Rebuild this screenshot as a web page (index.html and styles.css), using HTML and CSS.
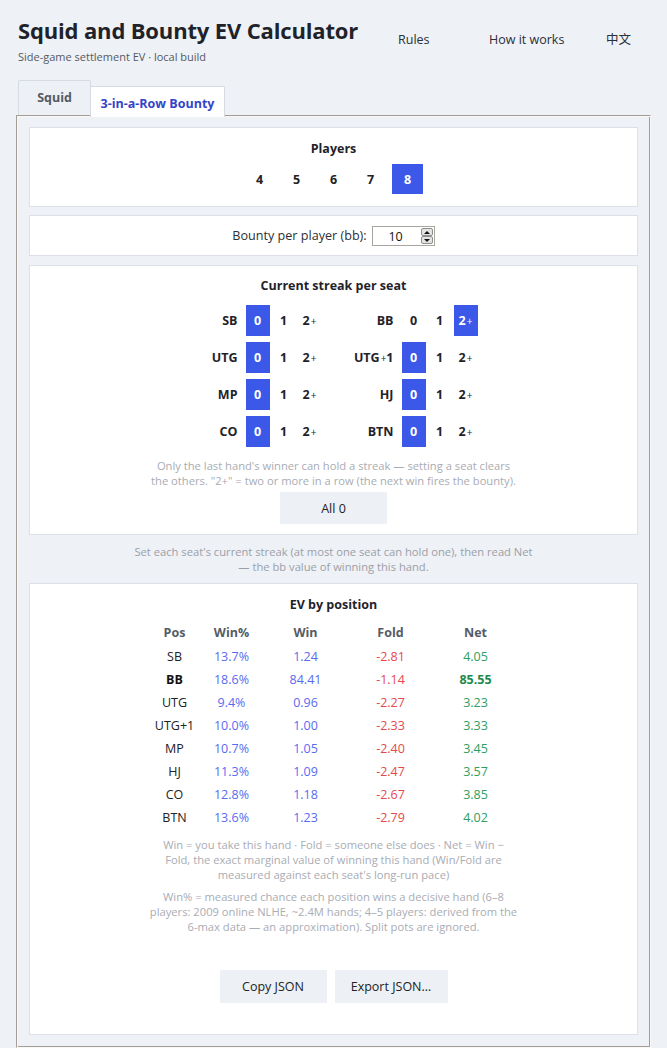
FILE: index.html
```html
<!DOCTYPE html>
<html lang="en">
<head>
<meta charset="utf-8">
<title>Squid and Bounty EV Calculator</title>
<link rel="stylesheet" href="styles.css">
</head>
<body>
<header class="top">
  <div class="brand">
    <h1 class="title">Squid and Bounty EV Calculator</h1>
    <div class="sub">Side-game settlement EV · local build</div>
  </div>
  <nav class="nav">
    <a class="nav-item nav-rules" href="#">Rules</a>
    <a class="nav-item nav-how" href="#">How it works</a>
    <a class="nav-item nav-lang" href="#">中文</a>
  </nav>
</header>

<div class="tabs">
  <button class="tab">Squid</button>
  <button class="tab tab-active">3-in-a-Row Bounty</button>
</div>

<div class="panel">
  <section class="card card-players">
    <div class="card-title">Players</div>
    <div class="pbtns">
      <button class="pbtn">4</button>
      <button class="pbtn">5</button>
      <button class="pbtn">6</button>
      <button class="pbtn">7</button>
      <button class="pbtn sel">8</button>
    </div>
  </section>

  <section class="card card-bounty">
    <label class="bounty-label">Bounty per player (bb):</label>
    <span class="numbox">
      <input class="num" type="text" value="10" aria-label="Bounty per player">
      <span class="spin"><span class="sp up"></span><span class="sp dn"></span></span>
    </span>
  </section>

  <section class="card card-streak">
    <div class="card-title">Current streak per seat</div>
    <div class="streak-grid">
      <div class="seat"><span class="seat-label">SB</span><span class="opts"><button class="opt sel">0</button><button class="opt">1</button><button class="opt">2<span class="plus">+</span></button></span></div>
      <div class="seat"><span class="seat-label">BB</span><span class="opts"><button class="opt">0</button><button class="opt">1</button><button class="opt sel">2<span class="plus">+</span></button></span></div>
      <div class="seat"><span class="seat-label">UTG</span><span class="opts"><button class="opt sel">0</button><button class="opt">1</button><button class="opt">2<span class="plus">+</span></button></span></div>
      <div class="seat"><span class="seat-label">UTG<span class="plus">+</span>1</span><span class="opts"><button class="opt sel">0</button><button class="opt">1</button><button class="opt">2<span class="plus">+</span></button></span></div>
      <div class="seat"><span class="seat-label">MP</span><span class="opts"><button class="opt sel">0</button><button class="opt">1</button><button class="opt">2<span class="plus">+</span></button></span></div>
      <div class="seat"><span class="seat-label">HJ</span><span class="opts"><button class="opt sel">0</button><button class="opt">1</button><button class="opt">2<span class="plus">+</span></button></span></div>
      <div class="seat"><span class="seat-label">CO</span><span class="opts"><button class="opt sel">0</button><button class="opt">1</button><button class="opt">2<span class="plus">+</span></button></span></div>
      <div class="seat"><span class="seat-label">BTN</span><span class="opts"><button class="opt sel">0</button><button class="opt">1</button><button class="opt">2<span class="plus">+</span></button></span></div>
    </div>
    <p class="note streak-note">Only the last hand's winner can hold a streak — setting a seat clears<br>the others. "2+" = two or more in a row (the next win fires the bounty).</p>
    <div class="center"><button class="gbtn all0">All 0</button></div>
  </section>

  <p class="outer-note">Set each seat's current streak (at most one seat can hold one), then read Net<br>— the bb value of winning this hand.</p>

  <section class="card card-ev">
    <div class="card-title">EV by position</div>
    <table class="ev">
      <colgroup><col class="c-pos"><col class="c-pct"><col class="c-win"><col class="c-fold"><col class="c-net"></colgroup>
      <thead>
        <tr><th>Pos</th><th>Win%</th><th>Win</th><th>Fold</th><th>Net</th></tr>
      </thead>
      <tbody>
        <tr><td class="pos">SB</td><td class="pct">13.7%</td><td class="win">1.24</td><td class="fold">-2.81</td><td class="net">4.05</td></tr>
        <tr class="hl"><td class="pos">BB</td><td class="pct">18.6%</td><td class="win">84.41</td><td class="fold">-1.14</td><td class="net">85.55</td></tr>
        <tr><td class="pos">UTG</td><td class="pct">9.4%</td><td class="win">0.96</td><td class="fold">-2.27</td><td class="net">3.23</td></tr>
        <tr><td class="pos">UTG+1</td><td class="pct">10.0%</td><td class="win">1.00</td><td class="fold">-2.33</td><td class="net">3.33</td></tr>
        <tr><td class="pos">MP</td><td class="pct">10.7%</td><td class="win">1.05</td><td class="fold">-2.40</td><td class="net">3.45</td></tr>
        <tr><td class="pos">HJ</td><td class="pct">11.3%</td><td class="win">1.09</td><td class="fold">-2.47</td><td class="net">3.57</td></tr>
        <tr><td class="pos">CO</td><td class="pct">12.8%</td><td class="win">1.18</td><td class="fold">-2.67</td><td class="net">3.85</td></tr>
        <tr><td class="pos">BTN</td><td class="pct">13.6%</td><td class="win">1.23</td><td class="fold">-2.79</td><td class="net">4.02</td></tr>
      </tbody>
    </table>
    <p class="note ev-note">Win = you take this hand · Fold = someone else does · Net = Win −<br>Fold, the exact marginal value of winning this hand (Win/Fold are<br>measured against each seat's long-run pace)</p>
    <p class="note ev-note2">Win% = measured chance each position wins a decisive hand (6–8<br>players: 2009 online NLHE, ~2.4M hands; 4–5 players: derived from the<br>6-max data — an approximation). Split pots are ignored.</p>
    <div class="actions">
      <button class="gbtn copy">Copy JSON</button>
      <button class="gbtn export">Export JSON…</button>
    </div>
  </section>
</div>
</body>
</html>
```

FILE: styles.css
```css
* { box-sizing: border-box; }
body {
  margin: 0;
  background: #eef1f6;
  font-family: "Open Sans", "Noto Sans CJK SC", sans-serif;
  font-size: 12.5px;
  color: #222;
}
button { font-family: inherit; cursor: pointer; }

.top {
  display: flex;
  padding: 15px 0 0 18px;
}
.title {
  margin: 0;
  font-size: 22px;
  line-height: 30px;
  font-weight: 700;
  color: #1f2329;
  letter-spacing: -0.15px;
}
.sub {
  margin-top: 4px;
  font-size: 11px;
  line-height: 16px;
  color: #555a62;
}
.nav {
  margin-left: auto;
  display: flex;
  padding-top: 16px;
  padding-right: 24px;
}
.nav-item {
  display: block;
  color: #2b2f36;
  text-decoration: none;
  font-size: 12.5px;
  line-height: 18px;
  padding-left: 30px;
}
.nav-rules { width: 91px; }
.nav-how { width: 135px; }
.nav-lang { width: 49px; padding-left: 12px; }

.tabs {
  display: flex;
  align-items: flex-end;
  margin: 15px 0 0 18px;
}
.tab {
  border: 1px solid #d6dae1;
  border-bottom: 0;
  background: #edf0f5;
  color: #555a62;
  font-weight: 700;
  font-size: 12.5px;
  height: 35px;
  width: 73px;
  padding: 0 0 1px;
  border-radius: 2px 2px 0 0;
}
.tab-active {
  position: relative;
  z-index: 1;
  background: #fff;
  color: #3344c8;
  width: 135px;
  height: 31px;
  margin-left: -1px;
  margin-bottom: -2px;
  padding-top: 3px;
}

.panel {
  margin: 0 16px;
  border: 1px solid;
  border-color: #a39d95 #f8f8f8 #f8f8f8 #a39d95;
  box-shadow: inset 1px 1px 0 #f8f8f8, inset -1px -1px 0 #a39d95;
  padding: 11px 12px 12px;
}

.card {
  background: #fff;
  border: 1px solid #dde0e7;
}
.card-title {
  text-align: center;
  font-weight: 700;
  font-size: 12.5px;
  line-height: 18px;
  color: #1f2329;
}

.card-players { padding: 12px 0; }
.card-players .card-title { line-height: 17px; }
.pbtns {
  display: flex;
  justify-content: center;
  gap: 6px;
  margin-top: 7px;
}
.pbtn {
  width: 31px;
  height: 30px;
  border: 0;
  padding: 0;
  background: transparent;
  font-weight: 700;
  font-size: 12.5px;
  color: #222;
}
.sel { background: #3b58e8; color: #fff; }

.card-bounty {
  margin-top: 8px;
  padding: 10px 0 9px;
  display: flex;
  justify-content: center;
  align-items: center;
  gap: 5px;
  height: 41px;
}
.bounty-label { font-size: 12.6px; color: #2b2f36; line-height: 20px; }
.numbox {
  display: inline-flex;
  align-items: center;
  width: 63px;
  height: 20px;
  border: 1px solid #a9a59f;
  background: #fff;
  padding-right: 1px;
}
.num {
  border: 0;
  width: 46px;
  padding: 0;
  text-align: center;
  font: inherit;
  font-size: 12.5px;
  color: #111;
  background: transparent;
  outline: none;
}
.spin {
  margin-left: auto;
  width: 12px;
  height: 16px;
  display: flex;
  flex-direction: column;
}
.sp {
  flex: 1;
  background: #e4e4e4;
  border: 1px solid #8e8e8e;
  border-radius: 2px;
  display: flex;
  align-items: center;
  justify-content: center;
}
.sp::after {
  content: "";
  border-left: 3px solid transparent;
  border-right: 3px solid transparent;
}
.up::after { border-bottom: 3px solid #111; }
.dn::after { border-top: 3px solid #111; }

.card-streak {
  margin-top: 9px;
  padding: 11px 0 10px;
}
.streak-grid {
  display: grid;
  grid-template-columns: auto auto;
  justify-content: center;
  column-gap: 24px;
  row-gap: 6px;
  margin-top: 10px;
}
.seat { display: flex; align-items: center; }
.seat-label {
  width: 48px;
  margin-right: 8px;
  text-align: right;
  font-weight: 700;
  font-size: 12.5px;
  color: #1f2329;
}
.opts { display: flex; gap: 2px; }
.opt {
  width: 24px;
  height: 31px;
  border: 0;
  padding: 0;
  background: transparent;
  font-weight: 700;
  font-size: 12.5px;
  color: #1f2329;
}
.opt.sel { color: #fff; background: #3b58e8; }
.plus { font-size: 10px; font-weight: 400; margin-left: 1px; }

.note {
  margin: 0;
  text-align: center;
  font-size: 11.2px;
  line-height: 15px;
  color: #a9acb4;
}
.streak-note { margin-top: 11px; }
.center { display: flex; justify-content: center; margin-top: 4px; }
.gbtn {
  border: 0;
  background: #edf0f5;
  font-size: 12.5px;
  color: #222;
  height: 32px;
  padding: 0;
}
.all0 { width: 107px; }

.outer-note {
  margin: 9px 0;
  text-align: center;
  font-size: 11.2px;
  line-height: 15px;
  color: #9c9fa8;
}

.card-ev { padding: 12px 0 31px; }
.ev {
  border-collapse: collapse;
  margin: 6px auto 0;
  table-layout: fixed;
  width: 376px;
  font-size: 12.5px;
}
.c-pos { width: 58px; }
.c-pct { width: 56px; }
.c-win { width: 92px; }
.c-fold { width: 78px; }
.c-net { width: 92px; }
.ev th {
  height: 25px;
  padding: 0;
  font-weight: 700;
  color: #555c66;
  text-align: center;
  vertical-align: middle;
}
.ev td {
  height: 23px;
  padding: 0;
  text-align: center;
  vertical-align: middle;
}
.pos { color: #222; }
.pct, .win { color: #5a6af0; }
.fold { color: #e5484d; }
.net { color: #2f9e5e; }
.hl .pos { font-weight: 700; color: #111; }
.hl .net { font-weight: 700; color: #1e8a4a; }
.ev-note { margin-top: 8px; }
.ev-note2 { margin-top: 7px; }
.actions {
  display: flex;
  justify-content: center;
  gap: 8px;
  margin-top: 36px;
}
.actions .gbtn { height: 33px; }
.copy { width: 107px; }
.export { width: 113px; }
```
